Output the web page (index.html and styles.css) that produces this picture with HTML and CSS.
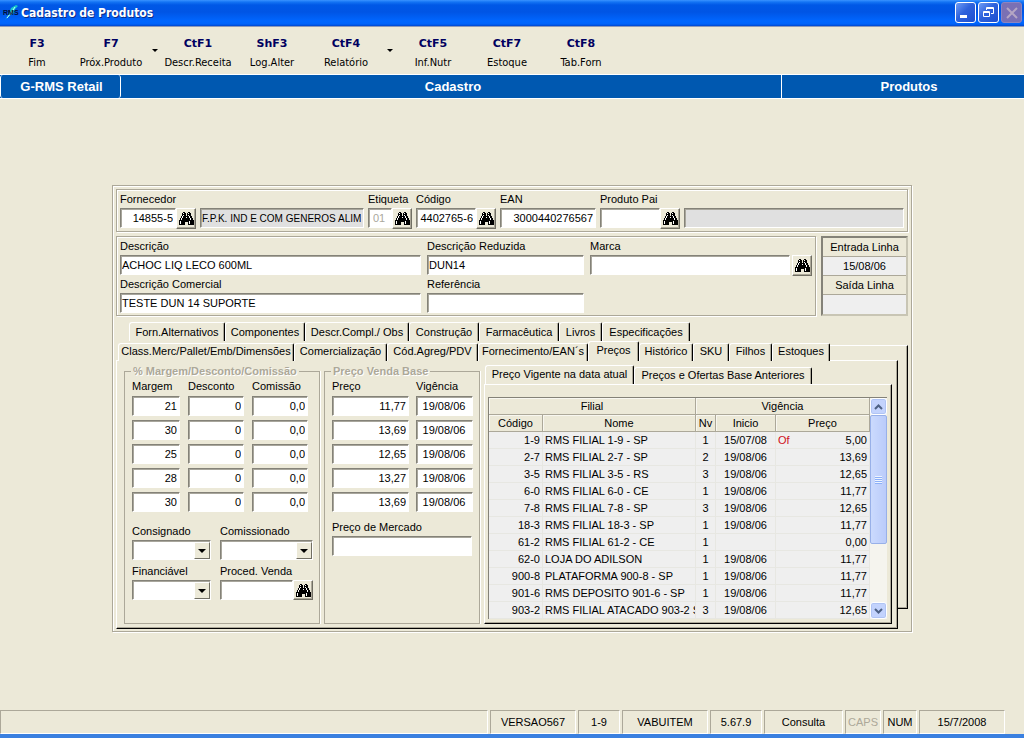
FILE: index.html
```html
<!DOCTYPE html>
<html lang="pt-BR">
<head>
<meta charset="utf-8">
<meta name="viewport" content="width=device-width, initial-scale=1">
<title>Cadastro de Produtos</title>
<link rel="stylesheet" href="styles.css">
</head>
<body>
<svg class="defs" aria-hidden="true">
  <symbol id="binoculars" viewBox="0 0 15 13">
    <path fill="#000" d="M4 0h2v1h1v3h1V1h1V0h2v1h1v3h1v2h1v2h1v5H9v-3H6v3H0V8h1V6h1V4h1V1h1z"/>
    <path fill="#fff" d="M4 1h1v1H4zM9 1h1v1H9zM4 3h1v1H4zM9 3h1v1H9zM3 4h1v2H3zM10 4h1v2h-1zM7 5h1v1H7zM2 6h1v2H2zM11 6h1v2h-1zM1 9h1v3H1zM10 9h1v3h-1z"/>
  </symbol>
</svg>

<header class="titlebar">
  <svg class="app-icon" viewBox="0 0 16 16" aria-hidden="true">
    <path d="M2 15 6 9 8 3 13 0 15 1 12 4 11 8 6 11z" fill="#19c8c8"/>
    <path d="M4 13 8 8 12 2" stroke="#bff" fill="none"/>
    <text x="0" y="10" class="app-icon-text">RMS</text>
  </svg>
  <h1 class="title">Cadastro de Produtos</h1>
  <div class="window-buttons">
    <button class="win" type="button" aria-label="Minimizar"><svg viewBox="0 0 19 19"><path d="M4 12h7v3H4z" fill="#fff"/></svg></button>
    <button class="win" type="button" aria-label="Restaurar"><svg viewBox="0 0 19 19"><path d="M7.500 7V4.500h7v6H12M7 5.500h8M4.500 8.500h6v5h-6zM4 9.500h7" fill="none" stroke="#fff"/></svg></button>
    <button class="win win-off" type="button" aria-label="Fechar" disabled><svg viewBox="0 0 19 19"><path d="M5 5l10 10M15 5L5 15" stroke="#b4a6c4" stroke-width="2"/></svg></button>
  </div>
</header>

<nav class="toolbar" aria-label="Ações">
  <button class="tool" type="button"><b>F3</b><span>Fim</span></button>
  <button class="tool" type="button"><b>F7</b><span>Próx.Produto</span></button>
  <button class="tool-more" type="button" aria-label="Mais produtos"><i class="arrow-small"></i></button>
  <button class="tool" type="button"><b>CtF1</b><span>Descr.Receita</span></button>
  <button class="tool" type="button"><b>ShF3</b><span>Log.Alter</span></button>
  <button class="tool" type="button"><b>CtF4</b><span>Relatório</span></button>
  <button class="tool-more" type="button" aria-label="Mais relatórios"><i class="arrow-small"></i></button>
  <button class="tool" type="button"><b>CtF5</b><span>Inf.Nutr</span></button>
  <button class="tool" type="button"><b>CtF7</b><span>Estoque</span></button>
  <button class="tool" type="button"><b>CtF8</b><span>Tab.Forn</span></button>
</nav>

<div class="band">
  <div>G-RMS Retail</div>
  <div>Cadastro</div>
  <div>Produtos</div>
</div>

<main class="work">
  <form class="panel etched">
    <section class="ids etched">
      <div class="field w-supplier"><label for="forn">Fornecedor</label>
        <div class="lookup"><input id="forn" class="num" value="14855-5"><button class="find" type="button" aria-label="Buscar fornecedor"><svg><use href="#binoculars"/></svg></button></div></div>
      <div class="field w-name"><input class="readonly" aria-label="Nome do fornecedor" value="F.P.K. IND E COM GENEROS ALIM" readonly></div>
      <div class="field w-tag"><label for="etiq">Etiqueta</label>
        <div class="lookup"><input id="etiq" class="tag" value="01" disabled><button class="find" type="button" aria-label="Buscar etiqueta"><svg><use href="#binoculars"/></svg></button></div></div>
      <div class="field w-code"><label for="cod">Código</label>
        <div class="lookup"><input id="cod" class="num" value="4402765-6"><button class="find" type="button" aria-label="Buscar código"><svg><use href="#binoculars"/></svg></button></div></div>
      <div class="field w-ean"><label for="ean">EAN</label><input id="ean" class="num" value="3000440276567"></div>
      <div class="field w-parent"><label for="pai">Produto Pai</label>
        <div class="lookup"><input id="pai"><button class="find" type="button" aria-label="Buscar produto pai"><svg><use href="#binoculars"/></svg></button></div></div>
      <div class="field w-rest"><input class="readonly" aria-label="Descrição do produto pai" readonly></div>
    </section>

    <div class="middle">
      <section class="descr etched">
        <div class="field"><label for="desc">Descrição</label><input id="desc" value="ACHOC LIQ LECO 600ML"></div>
        <div class="field"><label for="red">Descrição Reduzida</label><input id="red" value="DUN14"></div>
        <div class="field"><label for="marca">Marca</label>
          <div class="lookup"><input id="marca"><button class="find" type="button" aria-label="Buscar marca"><svg><use href="#binoculars"/></svg></button></div></div>
        <div class="field"><label for="com">Descrição Comercial</label><input id="com" value="TESTE DUN 14 SUPORTE"></div>
        <div class="field"><label for="ref">Referência</label><input id="ref"></div>
      </section>
      <dl class="dates">
        <dt>Entrada Linha</dt><dd>15/08/06</dd>
        <dt>Saída Linha</dt><dd></dd>
      </dl>
    </div>

    <div class="tabs tabs-back" role="tablist">
      <button class="tab" type="button" role="tab">Forn.Alternativos</button>
      <button class="tab" type="button" role="tab">Componentes</button>
      <button class="tab" type="button" role="tab">Descr.Compl./ Obs</button>
      <button class="tab" type="button" role="tab">Construção</button>
      <button class="tab" type="button" role="tab">Farmacêutica</button>
      <button class="tab" type="button" role="tab">Livros</button>
      <button class="tab" type="button" role="tab">Especificações</button>
    </div>
    <div class="tabs tabs-front" role="tablist">
      <button class="tab" type="button" role="tab">Class.Merc/Pallet/Emb/Dimensões</button>
      <button class="tab" type="button" role="tab">Comercialização</button>
      <button class="tab" type="button" role="tab">Cód.Agreg/PDV</button>
      <button class="tab" type="button" role="tab">Fornecimento/EAN´s</button>
      <button class="tab selected" type="button" role="tab" aria-selected="true">Preços</button>
      <button class="tab" type="button" role="tab">Histórico</button>
      <button class="tab" type="button" role="tab">SKU</button>
      <button class="tab" type="button" role="tab">Filhos</button>
      <button class="tab" type="button" role="tab">Estoques</button>
    </div>

    <div class="pages">
      <div class="page page-main" role="tabpanel">
        <fieldset class="group">
          <legend>% Margem/Desconto/Comissão</legend>
          <div class="grid-margin">
            <label for="m1">Margem</label><label for="d1">Desconto</label><label for="c1">Comissão</label>
            <input id="m1" class="num" value="21"><input id="d1" class="num" value="0"><input id="c1" class="num" value="0,0">
            <input aria-label="Margem 2" class="num" value="30"><input aria-label="Desconto 2" class="num" value="0"><input aria-label="Comissão 2" class="num" value="0,0">
            <input aria-label="Margem 3" class="num" value="25"><input aria-label="Desconto 3" class="num" value="0"><input aria-label="Comissão 3" class="num" value="0,0">
            <input aria-label="Margem 4" class="num" value="28"><input aria-label="Desconto 4" class="num" value="0"><input aria-label="Comissão 4" class="num" value="0,0">
            <input aria-label="Margem 5" class="num" value="30"><input aria-label="Desconto 5" class="num" value="0"><input aria-label="Comissão 5" class="num" value="0,0">
          </div>
          <div class="grid-flags">
            <div class="field"><label for="cons">Consignado</label><div class="combo"><select id="cons"><option></option></select><span><i class="arrow"></i></span></div></div>
            <div class="field"><label for="comi">Comissionado</label><div class="combo"><select id="comi"><option></option></select><span><i class="arrow"></i></span></div></div>
            <div class="field"><label for="fin">Financiável</label><div class="combo"><select id="fin"><option></option></select><span><i class="arrow"></i></span></div></div>
            <div class="field"><label for="proc">Proced. Venda</label><div class="lookup"><input id="proc"><button class="find" type="button" aria-label="Buscar procedimento"><svg><use href="#binoculars"/></svg></button></div></div>
          </div>
        </fieldset>

        <fieldset class="group">
          <legend>Preço Venda Base</legend>
          <div class="grid-price">
            <label for="p1">Preço</label><label for="v1">Vigência</label>
            <input id="p1" class="num" value="11,77"><input id="v1" class="date" value="19/08/06">
            <input aria-label="Preço 2" class="num" value="13,69"><input aria-label="Vigência 2" class="date" value="19/08/06">
            <input aria-label="Preço 3" class="num" value="12,65"><input aria-label="Vigência 3" class="date" value="19/08/06">
            <input aria-label="Preço 4" class="num" value="13,27"><input aria-label="Vigência 4" class="date" value="19/08/06">
            <input aria-label="Preço 5" class="num" value="13,69"><input aria-label="Vigência 5" class="date" value="19/08/06">
          </div>
          <div class="field market"><label for="merc">Preço de Mercado</label><input id="merc"></div>
        </fieldset>

        <section class="history">
          <div class="tabs tabs-inner" role="tablist">
            <button class="tab selected" type="button" role="tab" aria-selected="true">Preço Vigente na data atual</button>
            <button class="tab" type="button" role="tab">Preços e Ofertas Base Anteriores</button>
          </div>
          <div class="page page-inner" role="tabpanel">
            <div class="list">
              <div class="rows">
                <table>
                  <colgroup><col class="c-code"><col><col class="c-nv"><col class="c-date"><col class="c-price"></colgroup>
                  <thead>
                    <tr><th colspan="2">Filial</th><th colspan="3">Vigência</th></tr>
                    <tr><th>Código</th><th>Nome</th><th>Nv</th><th>Inicio</th><th>Preço</th></tr>
                  </thead>
                  <tbody>
                    <tr><td>1-9</td><td>RMS FILIAL 1-9 - SP</td><td>1</td><td>15/07/08</td><td><em>Of</em>5,00</td></tr>
                    <tr><td>2-7</td><td>RMS FILIAL 2-7 - SP</td><td>2</td><td>19/08/06</td><td>13,69</td></tr>
                    <tr><td>3-5</td><td>RMS FILIAL 3-5 - RS</td><td>3</td><td>19/08/06</td><td>12,65</td></tr>
                    <tr><td>6-0</td><td>RMS FILIAL 6-0 - CE</td><td>1</td><td>19/08/06</td><td>11,77</td></tr>
                    <tr><td>7-8</td><td>RMS FILIAL 7-8 - SP</td><td>3</td><td>19/08/06</td><td>12,65</td></tr>
                    <tr><td>18-3</td><td>RMS FILIAL 18-3 - SP</td><td>1</td><td>19/08/06</td><td>11,77</td></tr>
                    <tr><td>61-2</td><td>RMS FILIAL 61-2 - CE</td><td>1</td><td></td><td>0,00</td></tr>
                    <tr><td>62-0</td><td>LOJA DO ADILSON</td><td>1</td><td>19/08/06</td><td>11,77</td></tr>
                    <tr><td>900-8</td><td>PLATAFORMA 900-8 - SP</td><td>1</td><td>19/08/06</td><td>11,77</td></tr>
                    <tr><td>901-6</td><td>RMS DEPOSITO 901-6 - SP</td><td>1</td><td>19/08/06</td><td>11,77</td></tr>
                    <tr><td>903-2</td><td>RMS FILIAL ATACADO 903-2 S</td><td>3</td><td>19/08/06</td><td>12,65</td></tr>
                  </tbody>
                </table>
              </div>
              <div class="scroll">
                <button type="button" aria-label="Rolar para cima"><svg viewBox="0 0 9 6"><path d="M1 5l3.500-3.500L8 5" fill="none" stroke="#4d6185" stroke-width="2"/></svg></button>
                <div class="track"><div class="thumb"><i></i></div></div>
                <button type="button" aria-label="Rolar para baixo"><svg viewBox="0 0 9 6"><path d="M1 1l3.500 3.500L8 1" fill="none" stroke="#4d6185" stroke-width="2"/></svg></button>
              </div>
            </div>
          </div>
        </section>
      </div>
    </div>
  </form>
</main>

<footer class="status">
  <span></span><span>VERSAO567</span><span>1-9</span><span>VABUITEM</span><span>5.67.9</span><span>Consulta</span><span class="off">CAPS</span><span>NUM</span><span>15/7/2008</span>
</footer>
</body>
</html>
```
FILE: styles.css
```css
:root {
  --face: #ece9d8;
  --shade: #aca899;
  --dark: #716f64;
  --blue: #0058b0;
}

* { box-sizing: border-box; }

body {
  margin: 0;
  min-height: 100vh;
  display: flex;
  flex-direction: column;
  background: var(--face);
  color: #000;
  font: 11px/14px "Liberation Sans", Arial, sans-serif;
}

button, input, select {
  font: inherit;
  color: inherit;
  margin: 0;
  padding: 0;
  border: 0;
  border-radius: 0;
}

button { background: none; }
.defs { display: none; }

/* Title bar */
.titlebar {
  display: flex;
  align-items: center;
  height: 27px;
  padding: 0 2px 1px 3px;
  background: linear-gradient(#3a93ff 0, #1474f4 2px, #0058e6 5px, #0055e5 12px, #0066ff 21px, #0064fa 24px, #0038b8 27px);
  border-bottom: 1px solid #8c98b8;
}
.app-icon { width: 16px; height: 16px; overflow: visible; }
.app-icon-text { font: bold 7px "Liberation Sans", sans-serif; fill: #001038; }
.title {
  flex: 1;
  margin: 0 0 0 2px;
  color: #fff;
  font: bold 12px/16px "DejaVu Sans Condensed", "DejaVu Sans", sans-serif;
  text-shadow: 1px 1px #0b2c86;
}
.window-buttons { display: flex; gap: 2px; }
.win {
  width: 21px;
  height: 21px;
  border: 1px solid #fff;
  border-radius: 3px;
  background: linear-gradient(135deg, #6f9cf5, #2e62dc 45%, #1c4ed0);
}
.win svg { display: block; width: 19px; height: 19px; }
.win-off { border-color: #8c84c0; background: #7a70b4; }

/* Toolbar */
.toolbar { display: flex; height: 47px; }
.tool {
  width: 74px;
  padding-top: 10px;
  display: flex;
  flex-direction: column;
  align-items: center;
  gap: 5px;
  font: 11px/14px "DejaVu Sans Condensed", "DejaVu Sans", sans-serif;
  white-space: nowrap;
}
.tool b { color: #000060; font-family: "DejaVu Sans", sans-serif; }
.tool-more { width: 13px; display: grid; place-items: center; }
.arrow-small { border: 3px solid transparent; border-top-color: #000; border-bottom: 0; }

/* Section band */
.band {
  display: grid;
  grid-template-columns: 121px 1fr 242px;
  background: var(--blue);
  color: #fff;
  border-top: 1px solid #fff;
  border-bottom: 1px solid #fff;
  font: bold 13px/23px "Liberation Sans", Arial, sans-serif;
  text-align: center;
}
.band div { border-right: 1px solid #fff; padding-left: 4px; }
.band div:first-child { border-left: 1px solid #fff; border-radius: 3px; padding-left: 2px; }
.band div:last-child { border-right: 0; padding-left: 12px; }

/* Work area */
.work {
  flex: 1;
  display: flex;
  justify-content: center;
  align-items: flex-start;
  padding: 86px 16px 16px;
}
.etched { border: 1px solid var(--shade); box-shadow: inset 1px 1px #fff, 1px 1px #fff; }
.panel { flex: 0 1 800px; padding: 3px 3px 2px; }

/* Fields */
.field { display: flex; flex-direction: column; justify-content: flex-end; gap: 2px; min-width: 0; }
label { white-space: nowrap; }
input, select {
  width: 100%;
  min-width: 0;
  height: 20px;
  padding: 0 2px 0 1px;
  background: #fff;
  border: 1px solid;
  border-color: #848278 #fff #fff #848278;
  box-shadow: inset 1px 1px #a8a69c;
}
input:disabled { color: #aaa89c; }
.num { text-align: right; }
.tag { padding-left: 4px; }
.date { text-align: center; }
.readonly { background: #e0e0e0; font-size: 10px; }
.lookup { display: flex; }
.find {
  flex: 0 0 20px;
  height: 21px;
  display: grid;
  place-items: center;
  background: var(--face);
  border: 1px solid;
  border-color: #fff var(--dark) var(--dark) #fff;
  box-shadow: inset -1px -1px var(--shade);
}
.find svg { width: 15px; height: 13px; shape-rendering: crispEdges; }

.ids { display: flex; align-items: flex-start; gap: 4px; padding: 2px 3px; }
.ids .field { min-height: 37px; justify-content: flex-start; }
.w-supplier { flex: 0 0 76px; }
.w-name { flex: 0 0 164px; }
.w-tag { flex: 0 0 44px; }
.w-code { flex: 0 0 80px; }
.w-ean { flex: 0 0 96px; }
.w-parent { flex: 0 0 80px; }
.w-rest { flex: 1; }
.ids .w-name, .ids .w-rest { padding-top: 16px; }

.middle { display: grid; grid-template-columns: 1fr 87px; gap: 5px; margin-top: 4px; }
.descr {
  display: grid;
  grid-template-columns: 301px 157px 1fr;
  align-items: start;
  gap: 0 6px;
  padding: 2px 3px;
}
.descr .lookup { gap: 2px; }
.dates {
  display: grid;
  grid-template-rows: repeat(4, 1fr);
  margin: 0;
  border: 2px solid;
  border-color: #848278 #c8c5b4 #c8c5b4 #848278;
  text-align: center;
  line-height: 18px;
}
.dates dt, .dates dd { margin: 0; border-bottom: 1px solid var(--shade); }
.dates dd { background: #efefef; }
.dates dd:last-child { border-bottom: 0; }

/* Tabs */
.tabs { display: grid; align-items: end; }
.tab {
  height: 18px;
  border-top: 1px solid #fff;
  border-left: 1px solid #fff;
  border-right: 1px solid #000;
  border-radius: 3px 2px 0 0;
  box-shadow: inset -1px 0 var(--shade);
  background: var(--face);
  white-space: nowrap;
  line-height: 15px;
}
.tabs-back { grid-template-columns: 96px 80px 104px 70px 80px 43px 88px; margin: 6px 0 0 13px; }
.tabs-back .tab { height: 19px; }
.tabs-front { grid-template-columns: 176px 93px 91px 110px 51px 54px 36px 43px 58px; margin-left: 2px; position: relative; z-index: 2; height: 19px; }
.tabs-front .selected { height: 20px; }
.tabs-inner { grid-template-columns: 149px 178px; margin-left: 1px; height: 19px; }
.tabs-inner .selected { height: 20px; }
.tabs-front .tab, .tabs-inner .tab { padding-bottom: 2px; }

.pages { position: relative; margin-right: 10px; z-index: 0; }
.pages::before {
  content: "";
  position: absolute;
  z-index: -1;
  top: -15px;
  right: -10px;
  bottom: 20px;
  width: 80px;
  border: solid;
  border-width: 1px 1px 1px 0;
  border-color: #fff #000 #000;
  box-shadow: inset -1px -1px var(--shade);
}
.page {
  background: var(--face);
  border: solid;
  border-width: 1px;
  border-color: #fff #000 #000 #fff;
  box-shadow: inset -1px -1px var(--shade);
}
.page-main {
  display: grid;
  grid-template-columns: 196px 156px 1fr;
  gap: 4px;
  padding: 4px 5px 4px 7px;
}

/* Groups */
.group {
  margin: 0;
  min-width: 0;
  padding: 3px 7px 23px;
  border: 1px solid var(--shade);
  box-shadow: 1px 0 #fff;
}
.group legend {
  margin-left: -1px;
  padding: 0 2px;
  color: #aca899;
  font-weight: bold;
  line-height: 12px;
  text-shadow: 1px 1px #fff;
  white-space: nowrap;
}
.grid-margin, .grid-price, .grid-flags { display: grid; justify-content: start; }
.grid-margin { grid-template-columns: 48px 56px 56px; gap: 4px 8px; }
.grid-price { grid-template-columns: 77px 57px; gap: 4px 7px; }
.grid-margin label, .grid-price label { height: 12px; line-height: 12px; }
.grid-flags { grid-template-columns: 79px 93px; gap: 4px 9px; margin-top: 12px; }
.grid-flags .find { height: 20px; }
.market { margin-top: 8px; }

.combo { position: relative; }
.combo select { display: block; appearance: none; }
.combo span {
  position: absolute;
  top: 2px;
  right: 1px;
  width: 16px;
  height: 17px;
  display: grid;
  place-items: center;
  background: var(--face);
  border: 1px solid;
  border-color: #fff var(--dark) var(--dark) #fff;
  pointer-events: none;
}
.arrow { border: 4px solid transparent; border-top-color: #000; border-bottom: 0; }

/* Price list */
.history { min-width: 0; display: flex; flex-direction: column; }
.page-inner { flex: 1; padding: 12px 4px 4px 3px; }
.list {
  display: flex;
  border: solid;
  border-width: 1px 0 0 1px;
  border-color: #848278;
}
.rows { flex: 1; min-width: 0; }
.rows table { width: 100%; table-layout: fixed; border-collapse: separate; border-spacing: 0; }
.c-code { width: 54px; }
.c-nv { width: 20px; }
.c-date { width: 60px; }
.c-price { width: 94px; }
.list th, .list td {
  height: 17px;
  padding: 0 2px;
  overflow: hidden;
  white-space: nowrap;
  line-height: 15px;
}
.list th {
  padding: 0;
  font-weight: normal;
  border-right: 1px solid var(--shade);
  border-bottom: 1px solid var(--shade);
  box-shadow: inset 1px 1px #f8f7f0;
}
.list td {
  text-align: center;
  background: #efefef;
  border-right: 1px solid #e7e7e2;
  border-bottom: 1px solid #e7e7e2;
}
.list td:first-child, .list td:last-child { text-align: right; }
.list td:nth-child(2) { text-align: left; padding-right: 0; }
.list em { float: left; color: #d01020; font-style: normal; }

.scroll { flex: 0 0 17px; display: flex; flex-direction: column; background: #f5f4ee; }
.scroll button {
  height: 17px;
  display: grid;
  place-items: center;
  background: #c3d3fd;
  border: 1px solid #fff;
  border-radius: 3px;
  box-shadow: inset 0 0 0 1px #b0c4f4;
}
.scroll svg { width: 9px; height: 6px; }
.track { flex: 1; }
.thumb {
  height: 69%;
  display: grid;
  place-items: center;
  background: linear-gradient(90deg, #cbdafd, #bacbfa);
  border: 1px solid #98b0e8;
  border-radius: 2px;
}
.thumb i {
  width: 7px;
  height: 8px;
  background: repeating-linear-gradient(#eef4fe 0 1px, #8cb0f8 1px 2px);
}

/* Status bar */
.status {
  display: grid;
  grid-template-columns: 1fr 86px 42px 86px 52px 79px 36px 34px 86px;
  gap: 2px;
  padding: 0 19px 0 0;
  border-bottom: 4px solid #3a80e0;
  text-align: center;
}
.status span {
  height: 24px;
  line-height: 22px;
  border: 1px solid;
  border-color: var(--shade) #fff #fff var(--shade);
}
.off { color: var(--shade); }
```
